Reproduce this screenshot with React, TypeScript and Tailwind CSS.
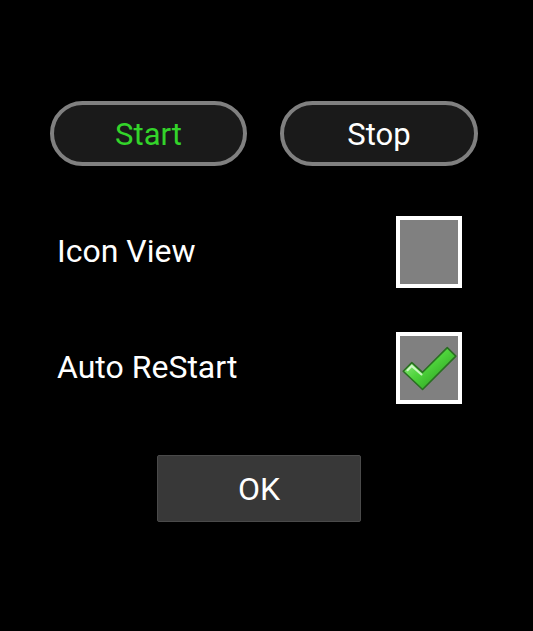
import { useState } from "react";

export default function App() {
  const [running, setRunning] = useState(true);
  const [iconView, setIconView] = useState(false);
  const [autoRestart, setAutoRestart] = useState(true);

  return (
    <div className="h-[631px] w-[533px] bg-black font-['Roboto',sans-serif] text-white">
      {/* Start / Stop */}
      <div className="flex gap-[33px] pl-[50px] pt-[101px]">
        <button
          type="button"
          onClick={() => setRunning(true)}
          className={`h-[65px] w-[197px] rounded-full border-[4px] border-[#808080] bg-[#1a1a1a] pt-[3px] text-[31px] ${
            running ? "text-[#33d42a]" : "text-white"
          }`}
        >
          Start
        </button>
        <button
          type="button"
          onClick={() => setRunning(false)}
          className={`h-[65px] w-[198px] rounded-full border-[4px] border-[#808080] bg-[#1a1a1a] pt-[3px] text-[31px] ${
            running ? "text-white" : "text-[#33d42a]"
          }`}
        >
          Stop
        </button>
      </div>

      {/* Options */}
      <div className="mt-[50px] flex flex-col gap-[44px] pl-[57px] pr-[71px]">
        <Option label="Icon View" checked={iconView} onToggle={() => setIconView((v) => !v)} />
        <Option label="Auto ReStart" checked={autoRestart} onToggle={() => setAutoRestart((v) => !v)} />
      </div>

      <div className="mt-[51px] flex justify-center pr-[15px]">
        <button
          type="button"
          className="h-[67px] w-[204px] rounded-[2px] border border-[#4a4a4a] bg-[#383838] text-[32px] text-white"
        >
          OK
        </button>
      </div>
    </div>
  );
}

function Option({ label, checked, onToggle }: { label: string; checked: boolean; onToggle: () => void }) {
  return (
    <div className="flex items-center justify-between">
      <span className="-mt-[3px] text-[32px]">{label}</span>
      <button
        type="button"
        onClick={onToggle}
        aria-pressed={checked}
        className="flex h-[72px] w-[66px] items-center justify-center border-[4px] border-white bg-[#808080]"
      >
        {checked && <CheckMark />}
      </button>
    </div>
  );
}

function CheckMark() {
  return (
    <svg width="58" height="52" viewBox="0 0 54 46">
      <defs>
        <linearGradient id="ck" x1="0" y1="0" x2="1" y2="1">
          <stop offset="0" stopColor="#b8f5a8" />
          <stop offset="0.45" stopColor="#4fd43c" />
          <stop offset="1" stopColor="#1e8f16" />
        </linearGradient>
      </defs>
      <path
        d="M3 26 L11 18 L21 27 L44 4 L52 12 L21 43 Z"
        fill="url(#ck)"
        stroke="#2a6e22"
        strokeWidth="1.5"
        strokeLinejoin="round"
      />
      <path d="M7 25 L11 21 L20 29" stroke="#e6ffe0" strokeWidth="2" fill="none" strokeLinecap="round" opacity="0.8" />
    </svg>
  );
}
